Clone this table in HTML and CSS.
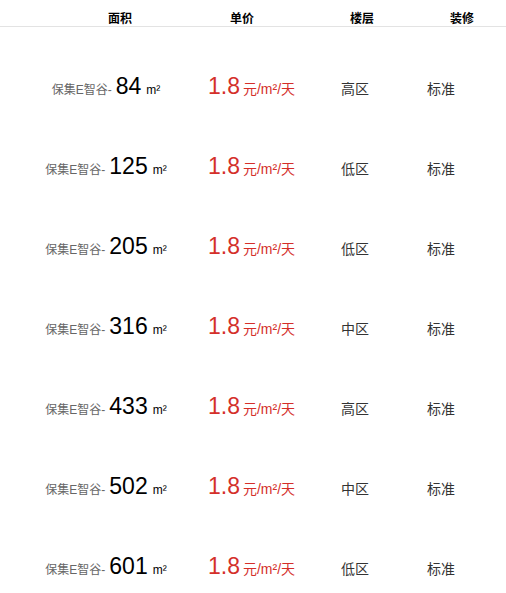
FILE: index.html
```html
<!DOCTYPE html>
<html lang="zh-CN">
<head>
<meta charset="utf-8">
<title>房源列表</title>
<link rel="stylesheet" href="styles.css">
</head>
<body>
<div class="table">
  <div class="head">
    <div class="hcell">面积</div>
    <div class="hcell">单价</div>
    <div class="hcell">楼层</div>
    <div class="hcell">装修</div>
  </div>
  <div class="list">
    <div class="row">
      <div class="area"><span class="prefix">保集E智谷-</span><span class="num">84</span><span class="unit">m²</span></div>
      <div class="price"><span class="pnum">1.8</span><span class="punit">元/m²/天</span></div>
      <div class="floor">高区</div>
      <div class="deco">标准</div>
    </div>
    <div class="row">
      <div class="area"><span class="prefix">保集E智谷-</span><span class="num">125</span><span class="unit">m²</span></div>
      <div class="price"><span class="pnum">1.8</span><span class="punit">元/m²/天</span></div>
      <div class="floor">低区</div>
      <div class="deco">标准</div>
    </div>
    <div class="row">
      <div class="area"><span class="prefix">保集E智谷-</span><span class="num">205</span><span class="unit">m²</span></div>
      <div class="price"><span class="pnum">1.8</span><span class="punit">元/m²/天</span></div>
      <div class="floor">低区</div>
      <div class="deco">标准</div>
    </div>
    <div class="row">
      <div class="area"><span class="prefix">保集E智谷-</span><span class="num">316</span><span class="unit">m²</span></div>
      <div class="price"><span class="pnum">1.8</span><span class="punit">元/m²/天</span></div>
      <div class="floor">中区</div>
      <div class="deco">标准</div>
    </div>
    <div class="row">
      <div class="area"><span class="prefix">保集E智谷-</span><span class="num">433</span><span class="unit">m²</span></div>
      <div class="price"><span class="pnum">1.8</span><span class="punit">元/m²/天</span></div>
      <div class="floor">高区</div>
      <div class="deco">标准</div>
    </div>
    <div class="row">
      <div class="area"><span class="prefix">保集E智谷-</span><span class="num">502</span><span class="unit">m²</span></div>
      <div class="price"><span class="pnum">1.8</span><span class="punit">元/m²/天</span></div>
      <div class="floor">中区</div>
      <div class="deco">标准</div>
    </div>
    <div class="row">
      <div class="area"><span class="prefix">保集E智谷-</span><span class="num">601</span><span class="unit">m²</span></div>
      <div class="price"><span class="pnum">1.8</span><span class="punit">元/m²/天</span></div>
      <div class="floor">低区</div>
      <div class="deco">标准</div>
    </div>
  </div>
</div>
</body>
</html>
```

FILE: styles.css
```css
html, body {
  margin: 0;
  padding: 0;
  background: #fff;
}
body {
  font-family: "Liberation Sans", "Noto Sans CJK SC", sans-serif;
  color: #333;
}
.head {
  display: grid;
  grid-template-columns: 122px 120px 100px 1fr;
  padding-left: 108px;
  height: 27px;
  box-sizing: border-box;
  padding-top: 12px;
  border-bottom: 1px solid #e3e3e3;
  font-size: 12px;
  line-height: 14px;
  font-weight: bold;
  color: #000;
}
.list {
  padding-top: 20px;
}
.row {
  display: grid;
  grid-template-columns: 208px 133px 86px 1fr;
  align-items: baseline;
  height: 80px;
  box-sizing: border-box;
  padding-top: 26px;
}
.area {
  display: flex;
  justify-content: center;
  align-items: baseline;
  white-space: nowrap;
  line-height: 26px;
  padding-left: 4px;
}
.prefix {
  font-size: 12px;
  color: #666;
}
.num {
  font-size: 23px;
  color: #000;
  margin-left: 4px;
}
.unit {
  font-size: 12px;
  color: #000;
  margin-left: 5px;
}
.price {
  white-space: nowrap;
  line-height: 26px;
  color: #d42f2a;
}
.pnum {
  font-size: 23px;
}
.punit {
  font-size: 14px;
  margin-left: 3px;
}
.floor, .deco {
  font-size: 14px;
  line-height: 26px;
  color: #333;
}
```
